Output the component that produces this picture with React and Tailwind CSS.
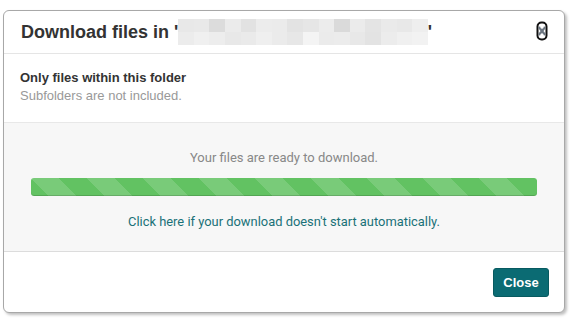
import React from 'react'

const blurTop = ['#e8e8e8','#e9e9e9','#dcdcdc','#ebebeb','#e2e2e2','#ececec','#ebebeb','#e3e3e3','#e6e6e6','#ececec','#dadada','#ebebeb','#e4e4e4','#eaeaea','#e8e8e8','#eeeeee']
const blurBottom = ['#ececec','#f0f0f0','#ededed','#e8e8e8','#eaeaea','#efefef','#ebebeb','#e7e7e7','#f4f4f4','#ebebeb','#ececec','#e8e8e8','#e3e3e3','#ececec','#f0f0f0','#f2f2f2']

const BlurredName = () => (
  <span className="inline-grid grid-cols-[repeat(16,15.6px)] grid-rows-[13px_13px] align-middle">
    {blurTop.concat(blurBottom).map((c, i) => (
      <span key={i} style={{ backgroundColor: c }} />
    ))}
  </span>
)

const BrokenClose = () => (
  <svg width="12" height="20" viewBox="0 0 12 20">
    <rect x="1.5" y="1.5" width="9" height="17" rx="4" fill="#fff" stroke="#111" strokeWidth="2" />
    <path d="M3 6 L9 14 M9 6 L3 14" stroke="#6b7580" strokeWidth="2.4" />
    <circle cx="6" cy="6" r="1.6" fill="#fff" />
    <circle cx="6" cy="14" r="1.6" fill="#fff" />
  </svg>
)

export default function App() {
  return (
    <div className="w-[572px] h-[323px] bg-white pt-[10px] pl-[3px] font-['Liberation_Sans',Arial,sans-serif]">
      <div className="w-[562px] h-[303px] flex flex-col border border-[#a8a8a8] rounded-[6px] bg-white shadow-[2px_2px_3px_rgba(0,0,0,0.25)] overflow-hidden">
        {/* header */}
        <div className="h-[43px] flex items-center justify-between pl-[17px] pr-[16px] border-b border-[#e5e5e5]">
          <h2 className="text-[18px] font-bold text-[#333] flex items-center">
            Download files in '<BlurredName />'
          </h2>
          <button className="mt-[-2px]"><BrokenClose /></button>
        </div>

        {/* info */}
        <div className="h-[69px] pl-[16px] pt-[15px] border-b border-[#e8e8e8]">
          <div className="text-[13px] font-bold text-[#333] leading-[18px]">Only files within this folder</div>
          <div className="text-[13px] text-[#999] leading-[18px]">Subfolders are not included.</div>
        </div>

        {/* progress */}
        <div className="h-[129px] bg-[#f7f7f7] flex flex-col items-center pt-[27px] border-b border-[#dcdcdc]">
          <div className="text-[13px] text-[#888] leading-[16px] font-['Roboto',sans-serif]">Your files are ready to download.</div>
          <div className="mt-[12px] w-[506px] h-[18px] rounded-[3px] bg-[#62c262] bg-[linear-gradient(45deg,rgba(255,255,255,0.15)_25%,transparent_25%,transparent_50%,rgba(255,255,255,0.15)_50%,rgba(255,255,255,0.15)_75%,transparent_75%,transparent)] bg-[length:56px_56px] shadow-[inset_0_-1px_0_rgba(0,0,0,0.15)]" />
          <a href="#" className="mt-[18px] text-[12.9px] text-[#1a7178] leading-[16px] font-['Roboto',sans-serif]">
            Click here if your download doesn't start automatically.
          </a>
        </div>

        {/* footer */}
        <div className="flex-1 flex items-start justify-end pr-[15px] pt-[16px]">
          <button className="w-[56px] h-[29px] rounded-[3px] bg-[#0b6b73] border border-[#085a60] text-white text-[13px] font-bold">
            Close
          </button>
        </div>
      </div>
    </div>
  )
}
